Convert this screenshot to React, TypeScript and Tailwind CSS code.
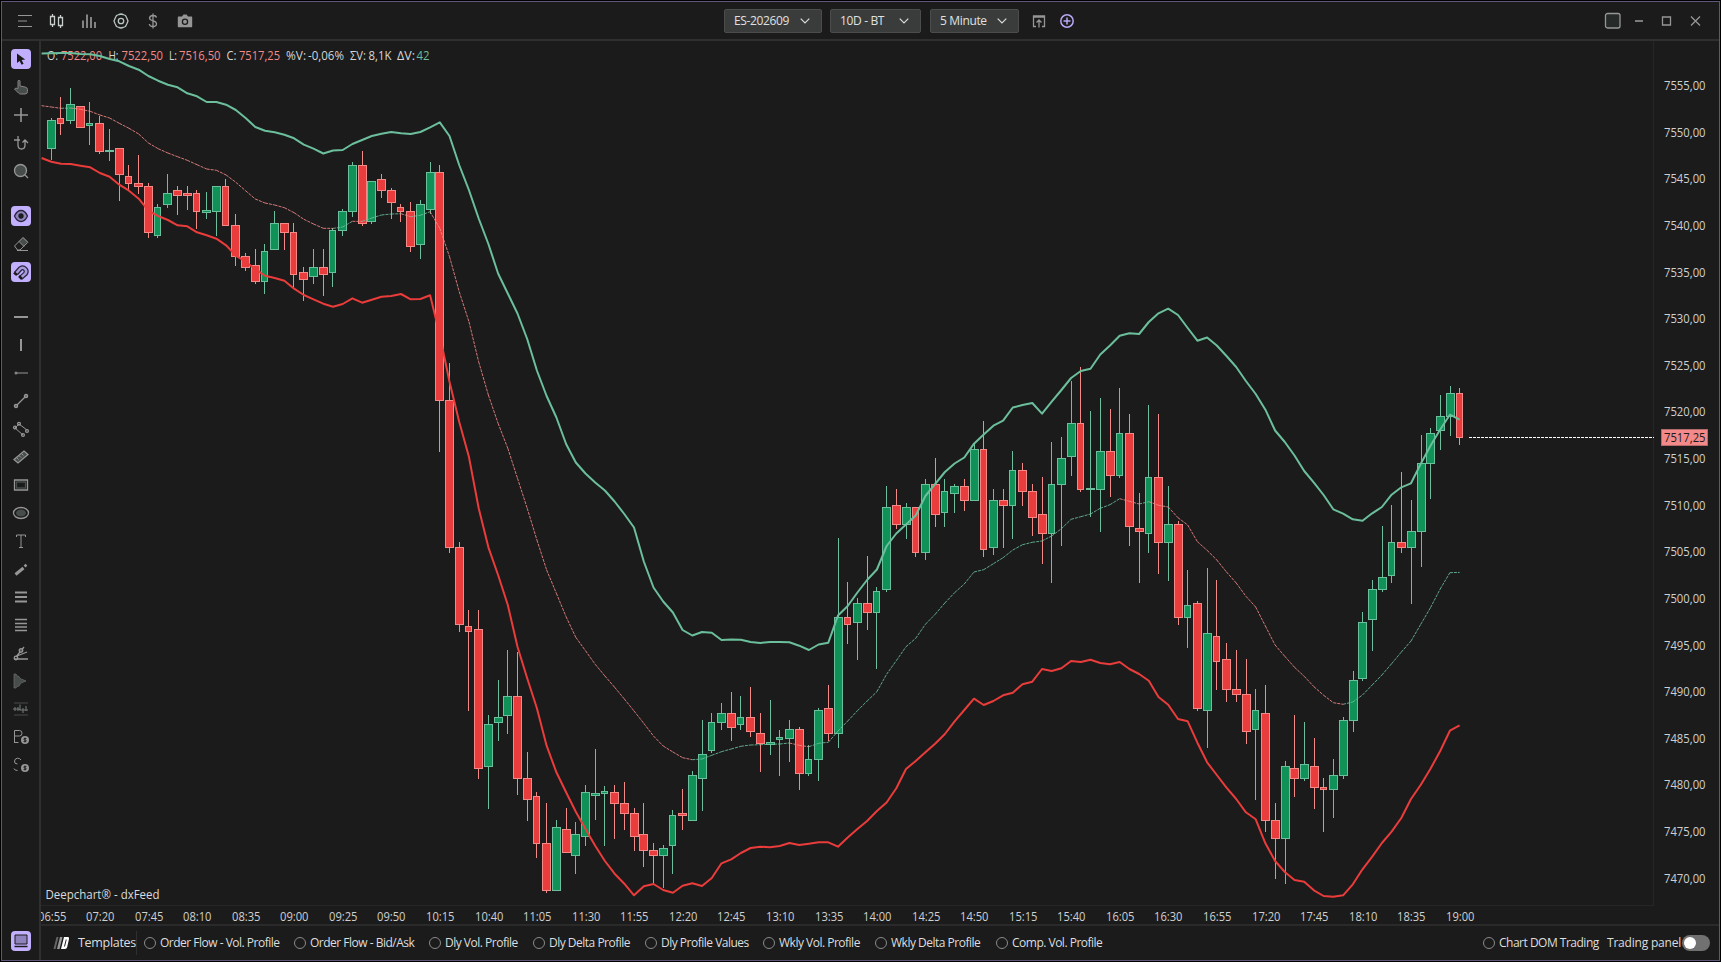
import React from 'react';

type Candle = [x: number, dir: 'u' | 'd', high: number, top: number, bottom: number, low: number, width?: number];

// Chart space: 41..1719 horizontally, 41..924 vertically
const CANDLES: Candle[] = [
  [51, 'u', 118, 120, 149, 160], [60, 'd', 97, 118, 124, 135, 7], [70, 'u', 88, 104, 121, 124], [80, 'd', 106, 106, 128, 128],
  [89, 'u', 102, 123, 126, 145, 7], [99, 'd', 116, 123, 152, 154], [109, 'u', 129, 150, 152, 161], [119, 'd', 148, 148, 175, 201],
  [128, 'd', 165, 176, 184, 190, 7], [138, 'd', 155, 183, 187, 194], [148, 'd', 183, 186, 233, 238], [157, 'u', 204, 207, 236, 238, 7],
  [167, 'u', 174, 193, 205, 208], [177, 'd', 186, 190, 196, 215], [187, 'd', 186, 193, 196, 210], [196, 'd', 190, 193, 212, 229, 7],
  [206, 'u', 192, 210, 213, 219], [216, 'u', 186, 186, 212, 236], [225, 'd', 179, 186, 226, 226, 7], [235, 'd', 214, 225, 257, 266],
  [245, 'd', 253, 256, 268, 271], [255, 'd', 249, 265, 282, 284], [264, 'u', 244, 251, 282, 294, 7], [274, 'u', 211, 223, 250, 250],
  [284, 'd', 223, 223, 233, 250], [293, 'd', 223, 232, 275, 289, 7], [303, 'd', 267, 272, 280, 301], [313, 'u', 249, 267, 277, 284],
  [323, 'd', 249, 267, 275, 296], [332, 'u', 228, 230, 273, 287, 7], [342, 'u', 209, 211, 231, 236], [352, 'u', 162, 165, 212, 217],
  [362, 'd', 151, 165, 224, 226], [371, 'u', 181, 181, 222, 224], [381, 'd', 174, 179, 191, 198], [391, 'd', 188, 190, 203, 219],
  [400, 'd', 204, 207, 212, 222, 7], [410, 'd', 202, 211, 247, 252], [420, 'u', 200, 204, 245, 259], [430, 'u', 162, 172, 210, 214],
  [439, 'd', 165, 172, 401, 452], [449, 'd', 363, 400, 548, 553], [459, 'd', 542, 547, 625, 632], [468, 'd', 610, 626, 632, 711, 7],
  [478, 'd', 610, 629, 769, 779], [488, 'u', 715, 724, 767, 809], [498, 'u', 680, 717, 723, 741], [507, 'u', 650, 696, 716, 734],
  [517, 'd', 652, 696, 779, 795], [527, 'd', 752, 778, 800, 821], [536, 'd', 792, 796, 844, 858, 7], [546, 'd', 803, 843, 891, 893],
  [556, 'u', 820, 827, 891, 891], [566, 'd', 808, 829, 853, 853], [575, 'u', 822, 834, 856, 874], [585, 'u', 785, 792, 837, 846],
  [595, 'u', 749, 793, 796, 820], [604, 'u', 786, 791, 794, 846, 7], [614, 'd', 785, 792, 804, 839], [624, 'd', 782, 803, 814, 830],
  [634, 'd', 808, 813, 837, 851], [643, 'd', 803, 834, 851, 867], [653, 'd', 843, 850, 856, 884], [663, 'u', 845, 848, 856, 888],
  [672, 'u', 810, 815, 846, 874, 7], [682, 'd', 789, 813, 816, 830], [692, 'u', 771, 775, 821, 821], [702, 'u', 720, 754, 779, 811],
  [711, 'u', 713, 722, 751, 753, 7], [721, 'u', 703, 713, 723, 730], [731, 'd', 692, 713, 728, 741], [740, 'u', 696, 717, 725, 730, 7],
  [750, 'd', 687, 717, 732, 737], [760, 'd', 713, 733, 744, 772], [770, 'u', 700, 742, 745, 755], [779, 'u', 730, 737, 740, 776, 7],
  [789, 'u', 720, 729, 739, 762], [799, 'd', 727, 729, 774, 790], [808, 'u', 745, 759, 774, 776, 7], [818, 'u', 708, 710, 760, 781],
  [828, 'd', 685, 708, 734, 741], [838, 'u', 538, 617, 734, 748], [847, 'd', 582, 617, 625, 644, 7], [857, 'u', 598, 603, 623, 660],
  [867, 'd', 556, 603, 613, 630], [876, 'u', 587, 591, 613, 669, 7], [886, 'u', 486, 507, 590, 592], [896, 'd', 489, 505, 525, 529],
  [906, 'u', 503, 507, 525, 539], [915, 'd', 507, 507, 553, 557, 7], [925, 'u', 479, 484, 553, 560], [935, 'd', 458, 484, 515, 527],
  [944, 'u', 479, 491, 513, 527, 7], [954, 'u', 484, 486, 494, 513], [964, 'd', 479, 486, 501, 511], [974, 'u', 443, 449, 501, 501],
  [983, 'd', 421, 449, 550, 557, 7], [993, 'u', 489, 500, 548, 555], [1003, 'd', 489, 500, 506, 548], [1012, 'u', 451, 470, 506, 539, 7],
  [1022, 'd', 463, 470, 492, 506], [1032, 'd', 484, 491, 518, 536], [1042, 'd', 477, 514, 534, 564], [1051, 'u', 442, 484, 534, 583, 7],
  [1061, 'u', 437, 458, 485, 546], [1071, 'u', 381, 423, 457, 476], [1080, 'd', 367, 423, 490, 492, 7], [1090, 'u', 411, 488, 490, 517],
  [1100, 'u', 398, 451, 490, 532], [1110, 'd', 409, 451, 476, 497], [1119, 'u', 388, 433, 476, 478, 7], [1129, 'd', 414, 433, 527, 546],
  [1139, 'd', 493, 528, 532, 583], [1148, 'u', 405, 477, 534, 553, 7], [1158, 'd', 414, 477, 543, 574], [1168, 'u', 486, 524, 543, 581],
  [1178, 'd', 521, 524, 618, 625], [1187, 'u', 570, 605, 618, 648, 7], [1197, 'd', 601, 603, 709, 711], [1207, 'u', 568, 633, 711, 748],
  [1216, 'd', 580, 636, 662, 690, 7], [1226, 'd', 643, 659, 690, 702], [1236, 'd', 650, 689, 695, 702], [1246, 'd', 659, 694, 732, 744],
  [1255, 'u', 689, 710, 730, 800, 7], [1265, 'd', 685, 713, 821, 832], [1275, 'd', 803, 820, 839, 879], [1285, 'u', 761, 766, 839, 884],
  [1294, 'd', 715, 768, 779, 797], [1304, 'u', 722, 764, 779, 781], [1314, 'd', 738, 766, 788, 809], [1323, 'd', 778, 787, 790, 832, 7],
  [1333, 'u', 759, 775, 790, 818], [1343, 'u', 717, 720, 776, 779], [1353, 'u', 671, 680, 721, 732], [1362, 'u', 612, 622, 679, 681],
  [1372, 'u', 580, 589, 620, 651], [1382, 'u', 526, 577, 590, 592], [1391, 'u', 505, 542, 576, 583, 7], [1401, 'd', 472, 542, 548, 553],
  [1411, 'u', 500, 531, 548, 604], [1421, 'u', 435, 463, 532, 567], [1430, 'u', 428, 433, 464, 499], [1440, 'u', 395, 416, 431, 450],
  [1450, 'u', 386, 393, 417, 436], [1459, 'd', 388, 393, 438, 445, 7],
];

// One value per candle, with a leading one that sits off the left edge
const UPPER = [
  53.5, 53.3, 53, 53, 54, 54.2, 56, 59, 61.3, 66, 69.7, 76, 80.7, 84.7, 87.3, 93.3, 96.3, 102, 102, 104.7, 110, 118, 127, 130.7, 132.3,
  134.7, 138.3, 144.7, 148.7, 153.5, 150.5, 150, 144, 140, 136, 133.7, 132, 133.3, 134, 132, 127.3, 122.3,
  136, 165, 190, 218.5, 244, 273.5, 293.5, 313.5, 339, 370.5, 396, 417.5, 444, 462.5, 473.5, 482.5, 490.5, 501.5, 514, 527.5, 561.5, 587.5,
  601.5, 612.5, 630, 635.5, 632, 632.7, 640, 639.5, 639.7, 642, 643, 642, 642, 642.3, 645.7, 650, 644.5, 642.7,
  615.5, 606, 592.5, 580, 569.5, 546, 533.5, 524.5, 515.5, 496, 484, 472, 463.5, 457.5, 443.7, 434.5, 425.7, 420.7, 407.5, 405, 403, 413.7,
  401.7, 390, 378, 371, 368.7, 354.5, 345.5, 335.7, 333.3, 334, 322, 313.3, 308.7, 315, 328, 340.7, 337.5, 345.5, 356, 367, 381, 394, 409.7,
  430.5, 442, 455.5, 471, 482.7, 495, 509.3, 513.7, 519.3, 520.7, 513.3, 507, 494.7, 487.3, 483.3, 463.7, 445.7, 429.5, 414.7, 419.7,
];

const MIDDLE = [
  105.7, 107, 108.3, 108, 109.3, 111.3, 115, 118, 123.3, 128.3, 134, 143, 148.7, 153, 156.7, 160.3, 164.7, 169, 170.3, 175, 182.3, 190.7,
  199, 203, 205, 207.7, 212.7, 219.3, 224, 228.3, 228.4, 227, 221.3, 221.4, 218, 215, 214, 213.7, 216.7, 215.3, 211.7,
  228.3, 256.7, 291.7, 321.7, 361.7, 395, 423.3, 448.3, 478.3, 508.3, 540, 570, 593.3, 616.7, 637.3, 650.7, 664.3, 676, 687.3, 699, 711,
  723.3, 736, 746, 752, 757.7, 759.7, 759, 755.3, 751.7, 749, 746.3, 745, 744.7, 744.3, 744, 743, 745.3, 746.7, 743.3, 742.3,
  731, 721, 710.7, 701, 691.7, 674.3, 660.7, 646.7, 638.3, 624.3, 614.3, 603, 592.7, 584, 572, 569.7, 563.7, 557.7, 550, 544.7, 542.3, 541,
  536, 528.7, 519.3, 516.7, 514, 508.3, 504.7, 498.7, 501.3, 504, 501.7, 505.3, 507, 517.7, 525, 541.7, 550.3, 560, 572, 583, 596.3, 607,
  626, 645, 656.3, 667.3, 676.3, 686.7, 695.3, 702.7, 704.3, 702, 695, 685, 675, 663.7, 652, 641, 624.3, 607.7, 589, 572.7, 572.4,
];

const LOWER = [
  158, 161.7, 163.7, 164, 165.7, 167.3, 173, 176.7, 184.7, 190.7, 198.7, 210.7, 216, 220, 225.3, 226.3, 232.3, 235.3, 238.7, 245.3, 255.7,
  261.7, 269, 275.7, 278, 280.7, 288.7, 295, 299.3, 303.7, 306.7, 304, 298.3, 302.7, 299.7, 296.7, 296, 294, 299.3, 299, 295.3,
  335, 381.7, 421.7, 456.7, 508.3, 547.3, 575, 605, 646.7, 678.3, 708.3, 745.7, 772.3, 792.3, 811.7, 829, 845.7, 861, 873.7, 883.7, 895.3,
  886.3, 884, 890, 892.7, 885.7, 883.3, 886, 878, 863.3, 859.3, 853, 848, 846.7, 847.3, 846, 843, 845, 843.7, 842.3, 842.3,
  846.7, 837.5, 829, 821, 811, 802.5, 788.3, 769, 761, 752.3, 743.7, 734, 721.3, 710, 698.7, 705, 701, 695.3, 692.7, 684.3, 681.7, 669,
  671, 668.3, 661, 662, 659.7, 663, 664.3, 662, 669, 674, 680.7, 697, 704.7, 719, 721.3, 742.7, 762.3, 775, 787.7, 799, 812.3, 819.3,
  843.3, 861, 872, 880, 881.7, 890.3, 896, 896.7, 895.3, 884.3, 869.3, 856.7, 843, 831.7, 818, 799, 784.7, 768.7, 751, 730.7, 725.3,
];

const GREEN = '#6cbf9c';
const RED = '#e93c3b';
const PINK = '#f48a88';

const STEP = 9.7125;
const lineX = (i: number) => 51.3 + (i - 1) * STEP;
const toPoints = (ys: number[]) => ys.map((y, i) => `${lineX(i).toFixed(1)},${y}`).join(' ');

const TIMES = [
  '06:55', '07:20', '07:45', '08:10', '08:35', '09:00', '09:25', '09:50', '10:15', '10:40', '11:05', '11:30', '11:55', '12:20', '12:45',
  '13:10', '13:35', '14:00', '14:25', '14:50', '15:15', '15:40', '16:05', '16:30', '16:55', '17:20', '17:45', '18:10', '18:35', '19:00',
];

const PRICES = Array.from({ length: 18 }, (_, i) => 7555 - i * 5);

const OHLC: [text: string, x: number, width: number, color: string][] = [
  ['O:', 47, 11, '#d6d6d6'], ['7522,00', 61, 41, PINK],
  ['H:', 108.5, 10, '#d6d6d6'], ['7522,50', 121.5, 41.5, PINK],
  ['L:', 169, 8, '#d6d6d6'], ['7516,50', 179, 41.5, PINK],
  ['C:', 226.5, 10, '#d6d6d6'], ['7517,25', 239, 41, PINK],
  ['%V:', 286, 20, '#d6d6d6'], ['-0,06%', 308, 36, '#d6d6d6'],
  ['ΣV:', 350, 16, '#d6d6d6'], ['8,1K', 368.5, 23, '#d6d6d6'],
  ['ΔV:', 397, 18, '#d6d6d6'], ['42', 416.5, 13, GREEN],
];

const Chart: React.FC = () => (
  <svg width="1678" height="883" viewBox="41 41 1678 883" className="block" fontFamily='"Open Sans", "Noto Sans", sans-serif' fontSize="12">
    {/* Axes */}
    <path d="M1653.5 41V905.5M41 905.5H1654" stroke="#262626" fill="none" />
    {OHLC.map(([text, x, width, color]) => (
      <text key={text} x={x} y={60} textLength={width} lengthAdjust="spacingAndGlyphs" fill={color}>{text}</text>
    ))}
    <text x={45.5} y={899} textLength={114} lengthAdjust="spacingAndGlyphs" fill="#dcdcdc">Deepchart® - dxFeed</text>

    {/* Candles */}
    <g shapeRendering="crispEdges">
      {CANDLES.map(([x, dir, high, top, bottom, low, width = 9]) => {
        const edge = dir === 'u' ? GREEN : PINK;
        return (
          <g key={x}>
            <rect x={x} y={high} width={1} height={low - high} fill={edge} />
            <rect x={x - (width - 1) / 2} y={top} width={width} height={bottom - top} fill={edge} />
            {bottom - top > 2 && (
              <rect
                x={x - (width - 1) / 2 + 1}
                y={top + 1}
                width={width - 2}
                height={bottom - top - 2}
                fill={dir === 'u' ? '#0f9158' : '#e93d3d'}
              />
            )}
          </g>
        );
      })}
    </g>

    {/* Channel */}
    {MIDDLE.slice(1).map((y, i) => (
      <line
        key={i}
        x1={lineX(i)}
        y1={MIDDLE[i]}
        x2={lineX(i + 1)}
        y2={y}
        stroke={y > MIDDLE[i] ? PINK : GREEN}
        strokeWidth={1}
        strokeOpacity={0.85}
        strokeDasharray="3 1"
      />
    ))}
    <polyline points={toPoints(LOWER)} fill="none" stroke={RED} strokeWidth={2} strokeLinejoin="round" />
    <polyline points={toPoints(UPPER)} fill="none" stroke={GREEN} strokeWidth={2} strokeLinejoin="round" />

    {/* Last price */}
    <path d="M1468.5 437.5H1654" stroke="#ffffff" strokeDasharray="3 1" shapeRendering="crispEdges" />
    <rect x={1661.5} y={429.5} width={46} height={16} fill="#f38a89" stroke="#b56a6a" />
    <text x={1664} y={442} textLength={41.5} lengthAdjust="spacingAndGlyphs" fill="#1b1b1b">7517,25</text>

    {PRICES.map((price, i) => (
      <text key={price} x={1664} y={Math.round(90 + i * 46.63)} textLength={41.5} lengthAdjust="spacingAndGlyphs" fill="#d0d0d0">
        {price},00
      </text>
    ))}
    {TIMES.map((time, i) => (
      <text key={time} x={Math.round(51.5 + i * STEP * 5) - 14} y={921} textLength={28.5} lengthAdjust="spacingAndGlyphs" fill="#d0d0d0">
        {time}
      </text>
    ))}
  </svg>
);

const Icon: React.FC<{ children: React.ReactNode; active?: boolean }> = ({ children, active }) => (
  <div className={active ? 'h-5 w-5 rounded-sm bg-[#c2b0ff]' : 'h-5 w-5'}>
    <svg width="20" height="20" viewBox="0 0 20 20" fill="none" stroke={active ? '#1b1b1b' : '#969696'} strokeWidth="1.3">
      {children}
    </svg>
  </div>
);

const Toolbar: React.FC = () => (
  <div className="flex w-[39px] shrink-0 flex-col items-center justify-between border-r-2 border-[#2f2f2f] pt-2 pb-[9px]">
    <div className="flex flex-col gap-[25px]">
      <div className="flex flex-col gap-2">
        <Icon active><path d="M6 4.5V14l2.6-2 2 3.8 2-1-2-3.7 3.6-.6Z" fill="#1b1b1b" stroke="none" /></Icon>
        <Icon><path d="M7 11V4.3q0-1 1-1t1 1V9l5 1q2.5.5 2.5 2.5v2q0 2.500-2.500 2.500H9.500q-1 0-2-1L3.500 12q1-1.500 3.500-.5Z" fill="#464d4b" stroke="#858585" strokeWidth="1" /></Icon>
        <Icon><path d="M10 3v14M3 10h14" strokeWidth="1.600" /></Icon>
        <Icon><path d="M3 7h6M7 3v9q0 4 3.500 4t3.500-4V7M11.500 9.500 14 7l3 3" /></Icon>
        <Icon><circle cx="9.500" cy="9.500" r="6" fill="#464d4b" /><path d="m14 14 3 3" /></Icon>
      </div>
      <div className="flex flex-col gap-2">
        <Icon active><path d="M3.500 10Q6 4.500 10 4.500T16.500 10Q14 15.500 10 15.500T3.500 10Z" fill="#8f83bd" stroke="#2a2540" /><circle cx="10" cy="10" r="2" fill="#1b1b1b" /></Icon>
        <Icon><path d="m8 7 4.500-4 4.500 4.500-4.500 4.500Z" fill="#464d4b" stroke="none" /><path d="m3.500 12 8.500-8.500 4.800 4.800L9 16H6.500ZM8 7.500l5 5M6 16.500h11" strokeWidth="1" /></Icon>
        <Icon active><path d="M5 11.500 9.500 6.500a3.600 3.600 0 0 1 5 5L9.500 16" stroke="#2a2540" strokeWidth="5" /><path d="M5 11.500 9.500 6.500a3.600 3.600 0 0 1 5 5L9.500 16" stroke="#a99ad9" strokeWidth="2.500" /><path d="m3 10.500 3 2.500M8 14l3 3" strokeWidth="2.500" /></Icon>
      </div>
      <div className="flex flex-col gap-2">
        <Icon><path d="M3 10h14" strokeWidth="2" /></Icon>
        <Icon><path d="M10 4v12" strokeWidth="2" /></Icon>
        <Icon><path d="M5 10h12" strokeWidth="1" /><circle cx="5" cy="10" r="1.500" fill="#858585" stroke="none" /></Icon>
        <Icon><path d="m5 15 10-10" /><circle cx="5" cy="15" r="1.600" fill="#666" /><circle cx="15" cy="5" r="1.600" fill="#666" /></Icon>
        <Icon><path d="m4 9 8 7M8 5l8 6M4 9l4-4" strokeWidth="1" /><circle cx="4" cy="8.500" r="1.400" /><circle cx="8" cy="4.800" r="1.400" /><circle cx="16" cy="12" r="1.400" /><circle cx="12" cy="16" r="1.400" /></Icon>
        <Icon><path d="m3 12.500 10-8.500 4 3.500-10 8.500Z" fill="#464d4b" /><path d="m6 11 1.500 1.500M8.500 9l1.500 1.500M11 7l1.500 1.500" strokeWidth="1" /></Icon>
        <Icon><path d="M3.500 5h13v10h-13Z" /><path d="M5.500 7h9v6h-9Z" stroke="#464d4b" /></Icon>
        <Icon><ellipse cx="10" cy="10" rx="7.500" ry="5.500" /><ellipse cx="10" cy="10" rx="5" ry="3.500" fill="#464d4b" stroke="none" /></Icon>
        <Icon><path d="M5.500 6V4h9v2M10 4v12M8 16.500h4" strokeWidth="1" /></Icon>
        <Icon><path d="m4.500 15.500 8-6.500" strokeWidth="3" /><path d="m13.500 7.500 2-1.800" strokeWidth="2.600" /></Icon>
        <Icon><path d="M4 5.500h12M4 10h12M4 14.500h12" strokeWidth="2" /></Icon>
        <Icon><path d="M4 4.500h12M4 8.500h12M4 12h12M4 15.500h12" strokeWidth="1.500" /></Icon>
        <Icon><path d="M3 16h14M5 14l8-10M6 13l10-4" /><circle cx="5" cy="15" r="1.800" /><circle cx="10" cy="7.500" r="1.800" fill="#555" /></Icon>
        <Icon><path d="M3 3h2l1 2 2 .5 1 2 6 2.500-5 2-2 3-2 .5L5 17H3Z" fill="#464d4b" stroke="#6f6f6f" strokeWidth=".7" /></Icon>
        <Icon><path d="M3 4h14M3 16h14" stroke="#464d4b" strokeWidth="1" /><path d="M4 8v4M7 8v4M9 5.500v6M12 9v5M15 7v5" stroke="#464d4b" strokeWidth="2" /><path d="M2 10h5l3 1h7" stroke="#777" strokeWidth="1" /></Icon>
        <Icon><path d="M3.500 16V3.500h5q2.500 0 2.500 2.700T8.500 9H3.500M3.500 15.500h4" strokeWidth="1" /><circle cx="14" cy="13" r="4" fill="#969696" stroke="none" /><path d="M15.500 11.500h-2.500v1.500h2v1.500h-2.500M14 10.500v5" stroke="#1b1b1b" strokeWidth=".8" /></Icon>
        <Icon><path d="M10 5q-1-1.800-3.500-1.800T3.500 6 6.500 9M3 13.500q.5 2 3.500 2" strokeWidth="1" /><circle cx="14" cy="13" r="4" fill="#969696" stroke="none" /><path d="M15.500 11.500h-2.500v1.500h2v1.500h-2.500M14 10.500v5" stroke="#1b1b1b" strokeWidth=".8" /></Icon>
      </div>
    </div>
    <Icon active><path d="M4 4h12v9H4Z" fill="#8f83bd" strokeWidth="1" /><path d="M3.500 15.500h13" strokeWidth="1.500" /></Icon>
  </div>
);

const Dropdown: React.FC<{ label: string; className: string }> = ({ label, className }) => (
  <div className={`flex h-6 items-center justify-between rounded-xs border border-[#4a4d4c] bg-[#393c3b] pr-[11px] pl-[9px] text-[#e0e0e0] ${className}`}>
    <span>{label}</span>
    <svg width="10" height="6" viewBox="0 0 10 6" fill="none" stroke="#d5dedb" strokeWidth="1.200"><path d="m.7.7 4.300 4.300L9.300.7" /></svg>
  </div>
);

const Header: React.FC = () => (
  <div className="flex h-[39px] shrink-0 items-center justify-between border-b-2 border-[#2f2f2f] pr-3 pl-[13px]">
    <div className="flex w-[709px] items-center gap-3">
      <Icon><path d="M3 4.500h14M3 10h9M3 15.500h14" strokeWidth="1.200" /></Icon>
      <Icon><path d="M3.500 5.500h4v8h-4ZM5.500 3v2.500M5.500 13.500V16M11.500 6.500h4v8h-4ZM13.500 4v2.500M13.500 14.500V17" stroke="#c9cfcd" /></Icon>
      <Icon><path d="M4 17V9.500M8 17V3.500M12 17V6M16 17v-6" strokeWidth="1.700" /></Icon>
      <Icon><path d="m8 3.500 2-.5 2 .5 2.500 1 1.500 3 1 2.500-1 2.500-1.500 3-2.500 1-2 .5-2-.5-2.500-1L4 12.500 3 10l1-2.500 1.500-3Z" stroke="#b9c6c1" strokeLinejoin="round" /><circle cx="10" cy="10" r="2.700" stroke="#b9c6c1" /></Icon>
      <Icon><path d="M13.500 6.500q-.5-2-3.500-2T6.500 7q0 2 3.500 2.800t3.500 3q0 2.700-3.500 2.700T6.300 13M10 2.500v15" /></Icon>
      <Icon><path d="M3.500 5.500H7l1.500-2h3l1.500 2h3.500q.7 0 .7.7v9.200q0 .8-.7.8h-13q-.7 0-.7-.8V6.200q0-.7.7-.7Z" fill="#969696" stroke="none" /><circle cx="10" cy="10.700" r="2.600" stroke="#1b1b1b" /></Icon>
    </div>
    <div className="flex flex-1 items-center text-[12px] tracking-[-0.35px]">
      <Dropdown label="ES-202609" className="w-[98px]" />
      <Dropdown label="10D - BT" className="ml-2 w-[91px]" />
      <Dropdown label="5 Minute" className="ml-[9px] w-[89px]" />
      <div className="ml-[10px] flex gap-2">
        <Icon><path d="M7 15.500H4.500V5h11v10.500H13M4.500 6h11M10 16.500V9.500M7.500 11.500 10 9l2.500 2.500" /></Icon>
        <Icon><circle cx="10" cy="10" r="6.200" stroke="#b9a8f5" strokeWidth="1.500" /><path d="M10 6.500v7M6.500 10h7" stroke="#b9a8f5" strokeWidth="1.500" /></Icon>
      </div>
    </div>
    <div className="flex items-center gap-2">
      <Icon><rect x="2.500" y="2.500" width="14.500" height="14.500" rx="2" fill="#262b29" /></Icon>
      <Icon><path d="M4 10h8" strokeWidth="1.600" /></Icon>
      <Icon><path d="M3.500 6h8v8h-8Z" /></Icon>
      <Icon><path d="m4 5.500 9 9M13 5.500l-9 9" /></Icon>
    </div>
  </div>
);

const TEMPLATES: [label: string, width: string][] = [
  ['Order Flow - Vol. Profile', 'w-[116px]'],
  ['Order Flow - Bid/Ask', 'w-[101px]'],
  ['Dly Vol. Profile', 'w-[70px]'],
  ['Dly Delta Profile', 'w-[78px]'],
  ['Dly Profile Values', 'w-[84px]'],
  ['Wkly Vol. Profile', 'w-[78px]'],
  ['Wkly Delta Profile', 'w-[87px]'],
  ['Comp. Vol. Profile', 'w-[87px]'],
];

const Radio: React.FC<{ label: string; width: string }> = ({ label, width }) => (
  <div className="flex items-center gap-1">
    <div className="h-3 w-3 rounded-full border border-[#8a8a8a]" />
    <span className={`whitespace-nowrap ${width}`}>{label}</span>
  </div>
);

const Footer: React.FC = () => (
  <div className="flex h-9 shrink-0 items-center border-t-2 border-[#2a2a2a] pl-3 text-[12px] tracking-[-0.5px] text-[#dedede]">
    <svg width="17" height="12" viewBox="0 0 17 12">
      <path d="M3.500 0h2L2.500 12h-2Z" fill="#666" />
      <path d="M7 0h2.500l-3 12H4Z" fill="#999" />
      <path d="M11 0h4q1.500 0 1 2l-1.800 8q-.5 2-2.200 2H8Zm1.800 2.500L11 9.500h1l1.700-7Z" fill="#fff" fillRule="evenodd" />
    </svg>
    <span className="ml-2 w-[58px] text-[12.5px] tracking-[-0.3px]">Templates</span>
    <div className="mr-[7px] h-6 w-px bg-[#2f2f2f]" />
    <div className="flex gap-[18px]">
      {TEMPLATES.map(([label, width]) => <Radio key={label} label={label} width={width} />)}
    </div>
    <div className="mr-[9px] ml-auto flex items-center">
      <Radio label="Chart DOM Trading" width="w-[94px]" />
      <span className="ml-[14px] w-[75px] whitespace-nowrap tracking-[-0.2px]">Trading panel</span>
      <div className="flex h-4 w-7 items-center rounded-full bg-[#717171] pl-0.5">
        <div className="h-3 w-3 rounded-full bg-white" />
      </div>
    </div>
  </div>
);

export default function App() {
  return (
    <div className="h-[962px] w-[1721px] overflow-hidden bg-black p-px font-['Open_Sans','Noto_Sans',sans-serif]">
      <div className="flex h-full flex-col border border-[#5f5679] bg-[#1b1b1b]">
        <Header />
        <div className="flex min-h-0 flex-1">
          <Toolbar />
          <div className="flex min-w-0 flex-1 flex-col">
            <Chart />
            <Footer />
          </div>
        </div>
      </div>
    </div>
  );
}
